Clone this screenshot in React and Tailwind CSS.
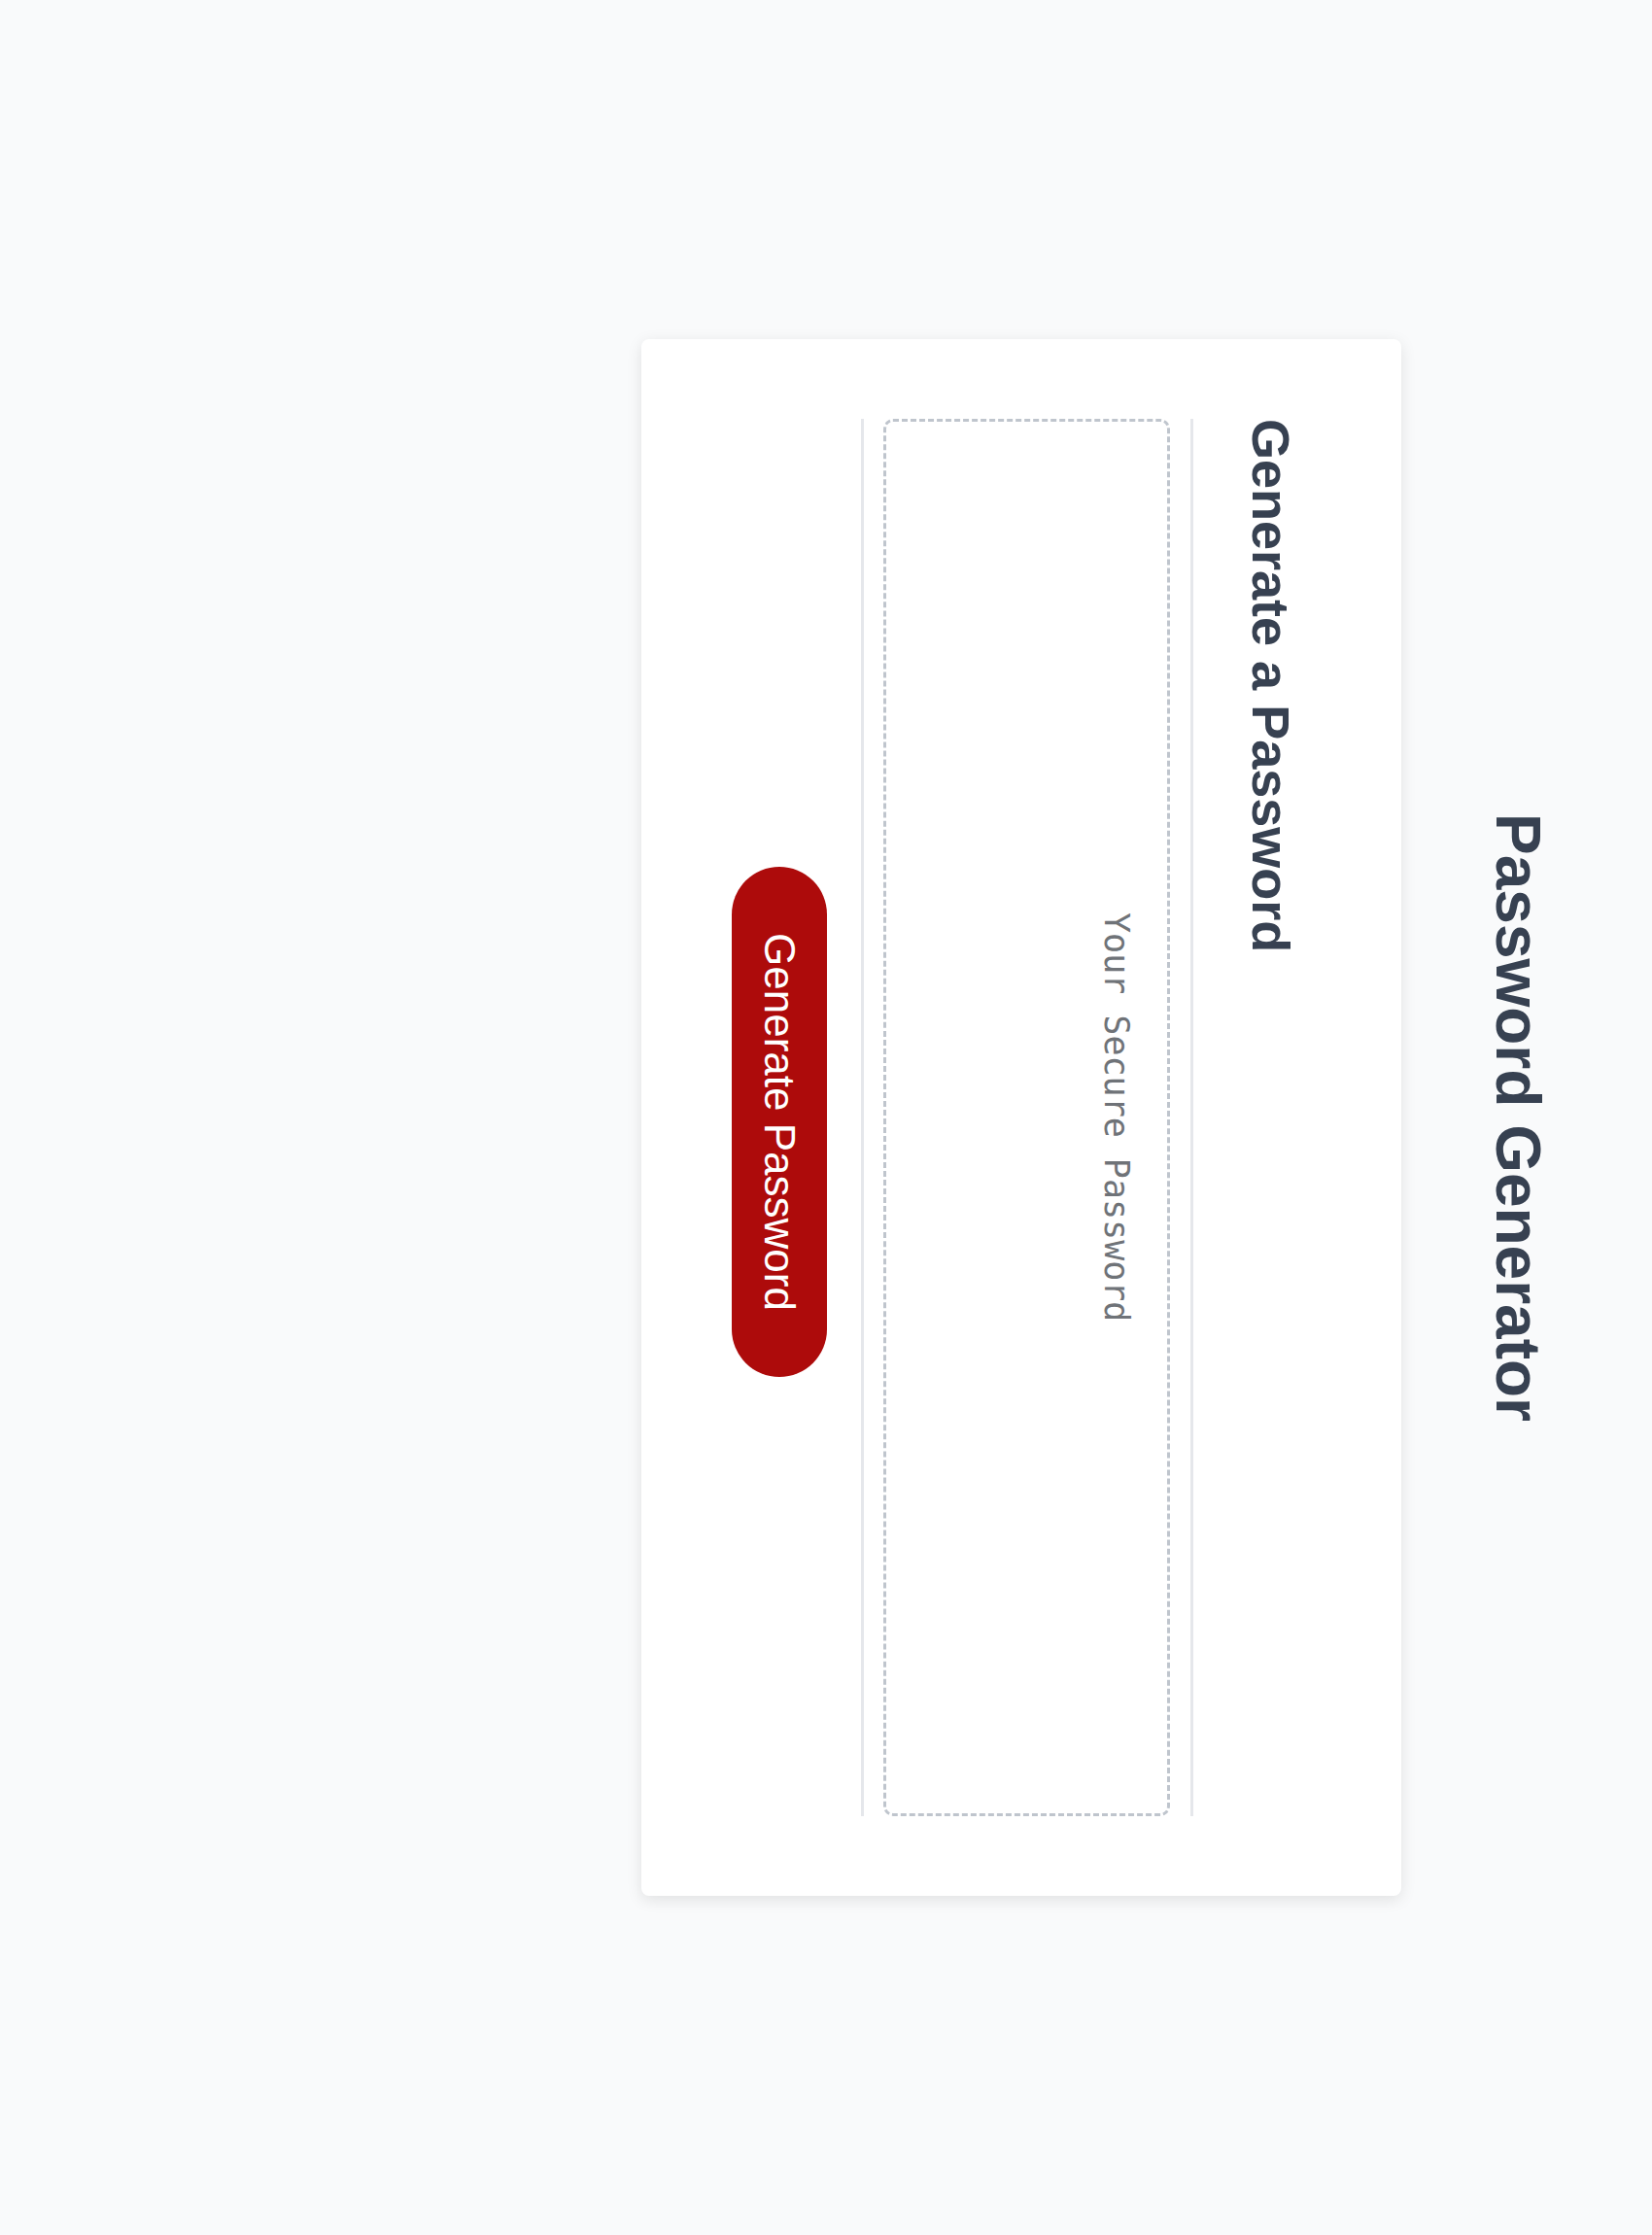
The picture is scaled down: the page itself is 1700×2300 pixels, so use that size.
export default function App() {
  return (
    <div className="h-[2300px] w-full overflow-hidden bg-[#f9fafb] font-['Liberation_Sans',Arial,sans-serif] [writing-mode:vertical-rl]">
      <h1 className="mr-[90px] text-center text-[64px] font-bold leading-[96px] text-[#374151]">
        Password Generator
      </h1>

      <div className="mr-[72px] mt-[349px] h-[1602px] w-[782px] rounded-lg bg-white pb-[82px] pl-[92px] pr-[94px] pt-[82px] shadow-[0_4px_16px_rgba(0,0,0,0.1)]">
        <h2 className="text-[54px] font-bold leading-[81px] text-[#374151]">Generate a Password</h2>

        <div className="mr-[39px] border-l-[3px] border-r-[3px] border-[#e5e7eb] pl-[20px] pr-[21px]">
          <div className="h-[1438px] w-[295px] rounded-[10px] border-[3px] border-dashed border-[#bfc5cd] pr-[26px] text-center font-['DejaVu_Sans_Mono',monospace] text-[35px] leading-[52px] text-[#6f7378]">
            Your Secure Password
          </div>
        </div>

        <div className="mr-[35px] flex justify-center pt-[8px]">
          <button
            type="button"
            className="h-[525px] w-[98px] rounded-full bg-[#ad0b0b] text-[44px] leading-[66px] text-white"
          >
            Generate Password
          </button>
        </div>
      </div>
    </div>
  )
}
